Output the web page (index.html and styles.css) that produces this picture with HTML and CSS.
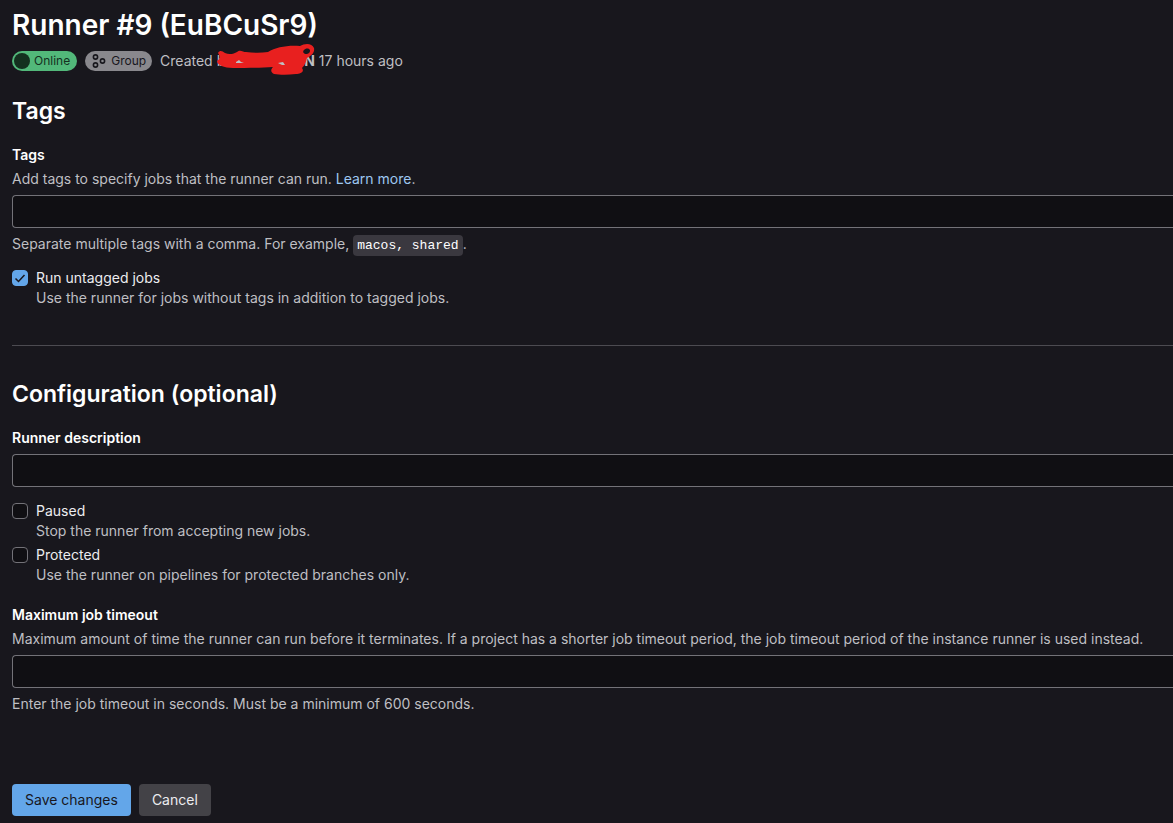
FILE: index.html
```html
<!DOCTYPE html>
<html lang="en">
<head>
    <meta charset="UTF-8">
    <meta name="viewport" content="width=device-width, initial-scale=1.0">
    <title>Runner #9 (EuBCuSr9)</title>
    <link rel="stylesheet" href="styles.css">
</head>
<body>

<header class="runner-header">
    <h1>Runner #9 (EuBCuSr9)</h1>
    <div class="runner-meta">
        <span class="badge badge-success">
            <svg class="badge-icon" width="16" height="16" viewBox="0 0 16 16" fill="currentColor" aria-hidden="true"><circle cx="8" cy="8" r="8"/></svg>
            Online
        </span>
        <span class="badge badge-muted">
            <svg class="badge-icon" width="16" height="16" viewBox="0 0 16 16" fill="none" stroke="currentColor" stroke-width="1.6" aria-hidden="true">
                <circle cx="4.5" cy="4" r="2.1"/>
                <circle cx="11.5" cy="8" r="2.1"/>
                <circle cx="4.5" cy="12" r="2.1"/>
            </svg>
            Group
        </span>
        <span class="created">Created b<span class="redacted"><svg class="scribble" width="100" height="32" viewBox="0 0 100 32" aria-hidden="true">
            <path fill="#e8201f" fill-rule="evenodd" d="M2 10C4 7 6 8 9 10C13 12 18 11 21 9C24 6 27 9 30 9C38 10 45 10 52 9C60 4 72 2 84 3C89 0 96 0 98 5C99 10 95 13 91 15C90 19 89 22 86 25C89 29 84 31 80 31C72 32 64 32 58 31C54 29 55 26 57 24C45 25 30 25 17 25C8 25 1 22 1 18C4 16 5 14 2 10ZM88 7C86 9 88 11 91 11C94 10 95 7 93 6C91 5 89 6 88 7Z"/>
            <path fill="#bfbfc3" d="M20 19L23 17L25 19L28 20L20 20ZM62 20L67 19L69 22L66 22Z"/>
        </svg></span><strong>N</strong> 17 hours ago</span>
    </div>
</header>

<form class="runner-form">
    <section class="form-section">
        <h2>Tags</h2>
        <div class="form-group">
            <label class="form-label" for="tags">Tags</label>
            <p class="description">Add tags to specify jobs that the runner can run. <a href="#">Learn more</a>.</p>
            <input type="text" id="tags" name="tags" class="form-input">
            <p class="help-text">Separate multiple tags with a comma. For example, <code>macos, shared</code>.</p>
        </div>
        <div class="checkbox">
            <input type="checkbox" id="untagged" name="untagged" checked>
            <label for="untagged">Run untagged jobs</label>
            <p>Use the runner for jobs without tags in addition to tagged jobs.</p>
        </div>
    </section>

    <hr>

    <section class="form-section">
        <h2>Configuration (optional)</h2>
        <div class="form-group">
            <label class="form-label" for="description">Runner description</label>
            <input type="text" id="description" name="description" class="form-input">
        </div>
        <div class="checkbox">
            <input type="checkbox" id="paused" name="paused">
            <label for="paused">Paused</label>
            <p>Stop the runner from accepting new jobs.</p>
        </div>
        <div class="checkbox">
            <input type="checkbox" id="protected" name="protected">
            <label for="protected">Protected</label>
            <p>Use the runner on pipelines for protected branches only.</p>
        </div>
        <div class="form-group timeout-group">
            <label class="form-label" for="timeout">Maximum job timeout</label>
            <p class="description">Maximum amount of time the runner can run before it terminates. If a project has a shorter job timeout period, the job timeout period of the instance runner is used instead.</p>
            <input type="text" id="timeout" name="timeout" class="form-input">
            <p class="help-text">Enter the job timeout in seconds. Must be a minimum of 600 seconds.</p>
        </div>
    </section>

    <div class="form-actions">
        <button type="submit" class="btn btn-confirm">Save changes</button>
        <button type="button" class="btn">Cancel</button>
    </div>
</form>

</body>
</html>
```
FILE: styles.css
```css
* {
    box-sizing: border-box;
}

body {
    margin: 0;
    padding: 7px 0 7px 12px;
    background-color: #18171d;
    color: #bfbfc3;
    font-family: Inter, "Noto Sans", sans-serif;
    font-size: 14px;
    line-height: 20px;
}

h1,
h2,
p {
    margin: 0;
}

h1,
h2 {
    color: #fff;
    font-weight: 600;
}

h1 {
    margin-bottom: 8px;
    font-size: 28px;
    line-height: 36px;
}

h2 {
    margin-bottom: 18px;
    font-size: 23px;
    line-height: 32px;
}

a {
    color: #9dc7f1;
    text-decoration: none;
}

a:hover {
    text-decoration: underline;
}

.runner-header {
    margin-bottom: 24px;
}

.runner-meta {
    display: flex;
    align-items: center;
    gap: 8px;
}

.badge {
    display: flex;
    align-items: center;
    gap: 4px;
    height: 20px;
    padding: 0 7px 0 2px;
    border-radius: 10px;
    font-size: 12px;
}

.badge-success {
    background-color: #52b87a;
    color: #14301f;
}

.badge-muted {
    padding: 0 6px;
    background-color: #89888d;
    color: #18171d;
}

.redacted {
    position: relative;
    display: inline-block;
    width: 79px;
}

/* marker strokes over the author's name */
.scribble {
    position: absolute;
    left: -9px;
    top: -23px;
}

.form-label {
    display: block;
    color: #fff;
    font-weight: 600;
}

.description {
    margin-top: 4px;
}

.form-input {
    display: block;
    width: 100%;
    height: 33px;
    margin-top: 6px;
    padding: 6px 12px;
    border: 1px solid #737278;
    border-right: 0;
    border-radius: 4px 0 0 4px;
    background-color: #100f13;
    color: #ececef;
    font: inherit;
}

.help-text {
    margin-top: 6px;
}

code {
    padding: 3px 4px;
    border-radius: 4px;
    background-color: #3a383f;
    color: #fff;
    font-family: "Liberation Mono", monospace;
    font-size: 13px;
    line-height: 1;
}

.form-group {
    margin-bottom: 14px;
}

.checkbox {
    display: grid;
    grid-template-columns: 16px 1fr;
    column-gap: 8px;
    align-items: center;
    margin-bottom: 4px;
}

.checkbox label {
    color: #ececef;
}

.checkbox p {
    grid-column: 2;
}

.checkbox input {
    appearance: none;
    width: 16px;
    height: 16px;
    margin: 0;
    border: 1px solid #737278;
    border-radius: 4px;
    background-color: #100f13;
}

.checkbox input:checked {
    border-color: #63a6e9;
    background: #63a6e9 url("data:image/svg+xml,%3Csvg xmlns='http://www.w3.org/2000/svg' viewBox='0 0 14 14'%3E%3Cpath d='M2.5 7.5 5.5 10.5 11.5 4' fill='none' stroke='%2318171d' stroke-width='1.5'/%3E%3C/svg%3E") center / 14px no-repeat;
}

hr {
    margin: 37px 0 32px;
    border: 0;
    border-top: 1px solid #4c4b51;
}

.timeout-group {
    margin-top: 20px;
}

.form-actions {
    display: flex;
    gap: 8px;
    margin-top: 70px;
}

.btn {
    height: 32px;
    padding: 0 13px;
    border: 0;
    border-radius: 4px;
    background-color: #434247;
    color: #ececef;
    font: inherit;
    cursor: pointer;
}

.btn-confirm {
    background-color: #63a6e9;
    color: #18171d;
}
```
